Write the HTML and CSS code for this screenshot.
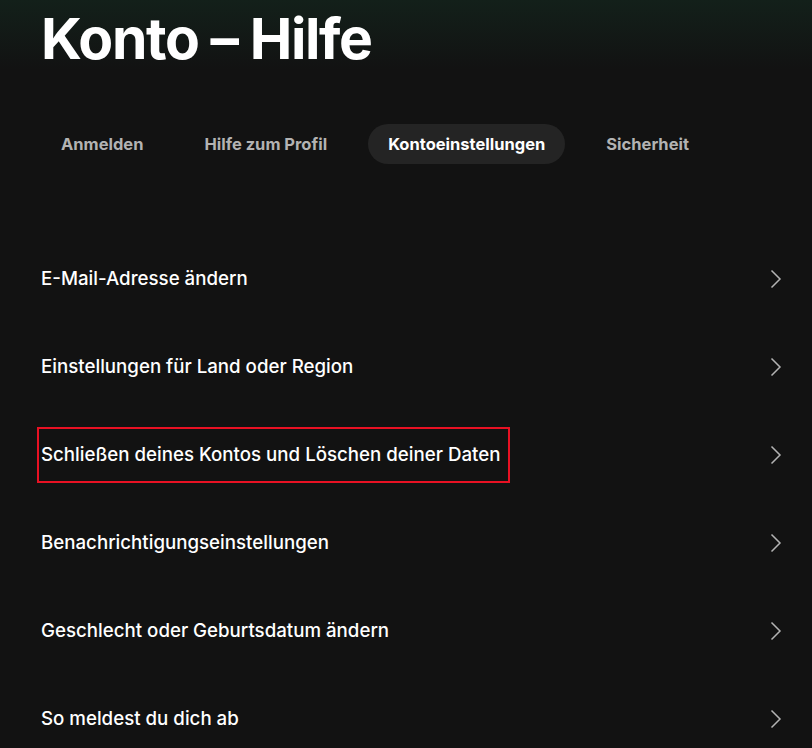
FILE: index.html
```html
<!DOCTYPE html>
<html lang="de">
<head>
<meta charset="utf-8">
<title>Konto – Hilfe</title>
<link rel="stylesheet" href="styles.css">
</head>
<body>
<div class="page">
  <h1 class="title">Konto – Hilfe</h1>
  <nav class="tabs">
    <a class="tab">Anmelden</a>
    <a class="tab">Hilfe zum Profil</a>
    <a class="tab active">Kontoeinstellungen</a>
    <a class="tab">Sicherheit</a>
  </nav>
  <ul class="list">
    <li class="row"><span class="label">E-Mail-Adresse ändern</span><svg class="chev" viewBox="0 0 12 20"><path d="M1.5 1.5 L10 10 L1.5 18.5" /></svg></li>
    <li class="row"><span class="label">Einstellungen für Land oder Region</span><svg class="chev" viewBox="0 0 12 20"><path d="M1.5 1.5 L10 10 L1.5 18.5" /></svg></li>
    <li class="row"><span class="label marked">Schließen deines Kontos und Löschen deiner Daten</span><svg class="chev" viewBox="0 0 12 20"><path d="M1.5 1.5 L10 10 L1.5 18.5" /></svg></li>
    <li class="row"><span class="label">Benachrichtigungseinstellungen</span><svg class="chev" viewBox="0 0 12 20"><path d="M1.5 1.5 L10 10 L1.5 18.5" /></svg></li>
    <li class="row"><span class="label">Geschlecht oder Geburtsdatum ändern</span><svg class="chev" viewBox="0 0 12 20"><path d="M1.5 1.5 L10 10 L1.5 18.5" /></svg></li>
    <li class="row"><span class="label">So meldest du dich ab</span><svg class="chev" viewBox="0 0 12 20"><path d="M1.5 1.5 L10 10 L1.5 18.5" /></svg></li>
  </ul>
</div>
</body>
</html>
```
FILE: styles.css
```css
html, body {
  margin: 0;
  padding: 0;
  height: 100%;
}
body {
  background: linear-gradient(to bottom, #13201a 0px, #121212 70px, #121212 100%);
  background-color: #121212;
  color: #fff;
  font-family: Inter, "Liberation Sans", sans-serif;
  overflow: hidden;
}
.page {
  padding: 0 30px 0 41px;
}
.title {
  margin: 0;
  padding-top: 4px;
  font-size: 57px;
  line-height: 70px;
  font-weight: 700;
  letter-spacing: -1.4px;
}
.tabs {
  display: flex;
  gap: 21px;
  margin-top: 50px;
}
.tab {
  display: block;
  height: 40px;
  line-height: 40px;
  padding: 0 20px;
  border-radius: 20px;
  font-size: 16.5px;
  font-weight: 700;
  color: #b3b3b3;
}
.tab.active {
  background: #242424;
  color: #fff;
}
.list {
  list-style: none;
  margin: 71px 0 0 0;
  padding: 0;
}
.row {
  display: flex;
  align-items: center;
  justify-content: space-between;
  height: 88px;
}
.label {
  font-size: 18.7px;
  line-height: 24px;
  font-weight: 500;
  padding: 13px 0;
}
.marked {
  outline: 2px solid #e81123;
  outline-offset: 0;
  padding: 14px 8px 14px 2px;
  margin-left: -2px;
}
.chev {
  width: 12px;
  height: 20px;
  margin-right: 0;
  fill: none;
  stroke: #b3b3b3;
  stroke-width: 1.5;
}
```
